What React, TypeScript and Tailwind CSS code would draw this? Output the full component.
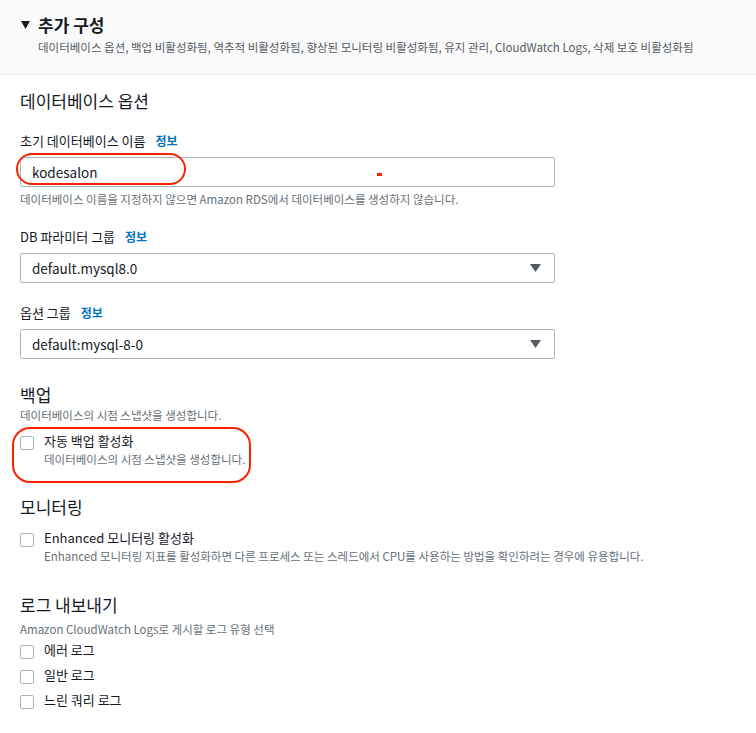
import React from 'react';

const font = { fontFamily: '"Noto Sans CJK KR", "Noto Sans", sans-serif' };

function Info() {
  return <span className="ml-[10px] text-[12px] font-bold text-[#0073bb]">정보</span>;
}

function Label({ children }: { children: React.ReactNode }) {
  return (
    <div className="flex items-center text-[13px] leading-[18px] text-[#16191f]">
      {children}
    </div>
  );
}

function Select({ value }: { value: string }) {
  return (
    <div className="mt-[7px] flex h-[30px] w-[535px] items-center justify-between border border-[#aab7b8] rounded-[2px] pl-[11px] pr-[13px] text-[13.5px] text-[#16191f]">
      <span>{value}</span>
      <svg width="11" height="8" viewBox="0 0 11 8">
        <path d="M0 0 H11 L5.5 8 Z" fill="#545b64" />
      </svg>
    </div>
  );
}

function Check({ label, desc }: { label: string; desc?: string }) {
  return (
    <div className="flex items-start">
      <div className="mt-[4px] h-[14px] w-[14px] shrink-0 rounded-[2px] border border-[#aab7b8] bg-white" />
      <div className="ml-[10px]">
        <div className="text-[13px] leading-[18px] text-[#16191f]">{label}</div>
        {desc && <div className="mt-[1px] text-[11.5px] leading-[16px] text-[#687078]">{desc}</div>}
      </div>
    </div>
  );
}

export default function App() {
  return (
    <div className="relative min-h-[733px] w-[756px] bg-white" style={font}>
      {/* Header */}
      <div className="h-[75px] border-b border-[#eaeded] bg-[#fafafa] pl-[21px] pt-[15px]">
        <div className="flex items-center">
          <svg width="9" height="8" viewBox="0 0 9 8" className="mr-[8px]">
            <path d="M0 0 H9 L4.5 8 Z" fill="#16191f" />
          </svg>
          <span className="text-[17px] font-bold leading-[20px] text-[#16191f]">추가 구성</span>
        </div>
        <div className="mt-[4px] pl-[17px] text-[11.5px] leading-[16px] text-[#545b64]">
          데이터베이스 옵션, 백업 비활성화됨, 역추적 비활성화됨, 향상된 모니터링 비활성화됨, 유지 관리, CloudWatch Logs, 삭제 보호 비활성화됨
        </div>
      </div>

      <div className="px-[20px] pt-[14px]">
        <div className="text-[17px] leading-[24px] text-[#16191f]">데이터베이스 옵션</div>

        <div className="mt-[19px]">
          <Label>
            초기 데이터베이스 이름 <Info />
          </Label>
        </div>
        <div className="mt-[7px] flex h-[30px] w-[535px] items-center border border-[#aab7b8] rounded-[2px] pl-[11px] text-[13.5px] text-[#16191f]">
          kodesalon
        </div>
        <div className="mt-[4px] text-[11.5px] leading-[16px] text-[#687078]">
          데이터베이스 이름을 지정하지 않으면 Amazon RDS에서 데이터베이스를 생성하지 않습니다.
        </div>

        <div className="mt-[21px]">
          <Label>
            DB 파라미터 그룹 <Info />
          </Label>
        </div>
        <Select value="default.mysql8.0" />

        <div className="mt-[21px]">
          <Label>
            옵션 그룹 <Info />
          </Label>
        </div>
        <Select value="default:mysql-8-0" />

        <div className="mt-[24px] text-[17px] leading-[24px] text-[#16191f]">백업</div>
        <div className="text-[11.5px] leading-[16px] text-[#687078]">데이터베이스의 시점 스냅샷을 생성합니다.</div>
        <div className="mt-[9px]">
          <Check label="자동 백업 활성화" desc="데이터베이스의 시점 스냅샷을 생성합니다." />
        </div>

        <div className="mt-[28px] text-[17px] leading-[24px] text-[#16191f]">모니터링</div>
        <div className="mt-[10px]">
          <Check
            label="Enhanced 모니터링 활성화"
            desc="Enhanced 모니터링 지표를 활성화하면 다른 프로세스 또는 스레드에서 CPU를 사용하는 방법을 확인하려는 경우에 유용합니다."
          />
        </div>

        <div className="mt-[29px] text-[17px] leading-[24px] text-[#16191f]">로그 내보내기</div>
        <div className="mt-[4px] text-[11.5px] leading-[16px] text-[#687078]">
          Amazon CloudWatch Logs로 게시할 로그 유형 선택
        </div>
        <div className="mt-[4px] flex flex-col gap-[7px] pb-[24px]">
          <Check label="에러 로그" />
          <Check label="일반 로그" />
          <Check label="느린 쿼리 로그" />
        </div>
      </div>

      {/* Red annotations */}
      <div className="absolute left-[16px] top-[153px] h-[32px] w-[170px] rounded-[16px] border-[2.5px] border-[#ff2200]" />
      <div className="absolute left-[377px] top-[173px] h-[3px] w-[5px] bg-[#ff2200]" />
      <div className="absolute left-[12px] top-[427px] h-[56px] w-[239px] rounded-[18px] border-[2.5px] border-[#ff2200]" />
    </div>
  );
}
